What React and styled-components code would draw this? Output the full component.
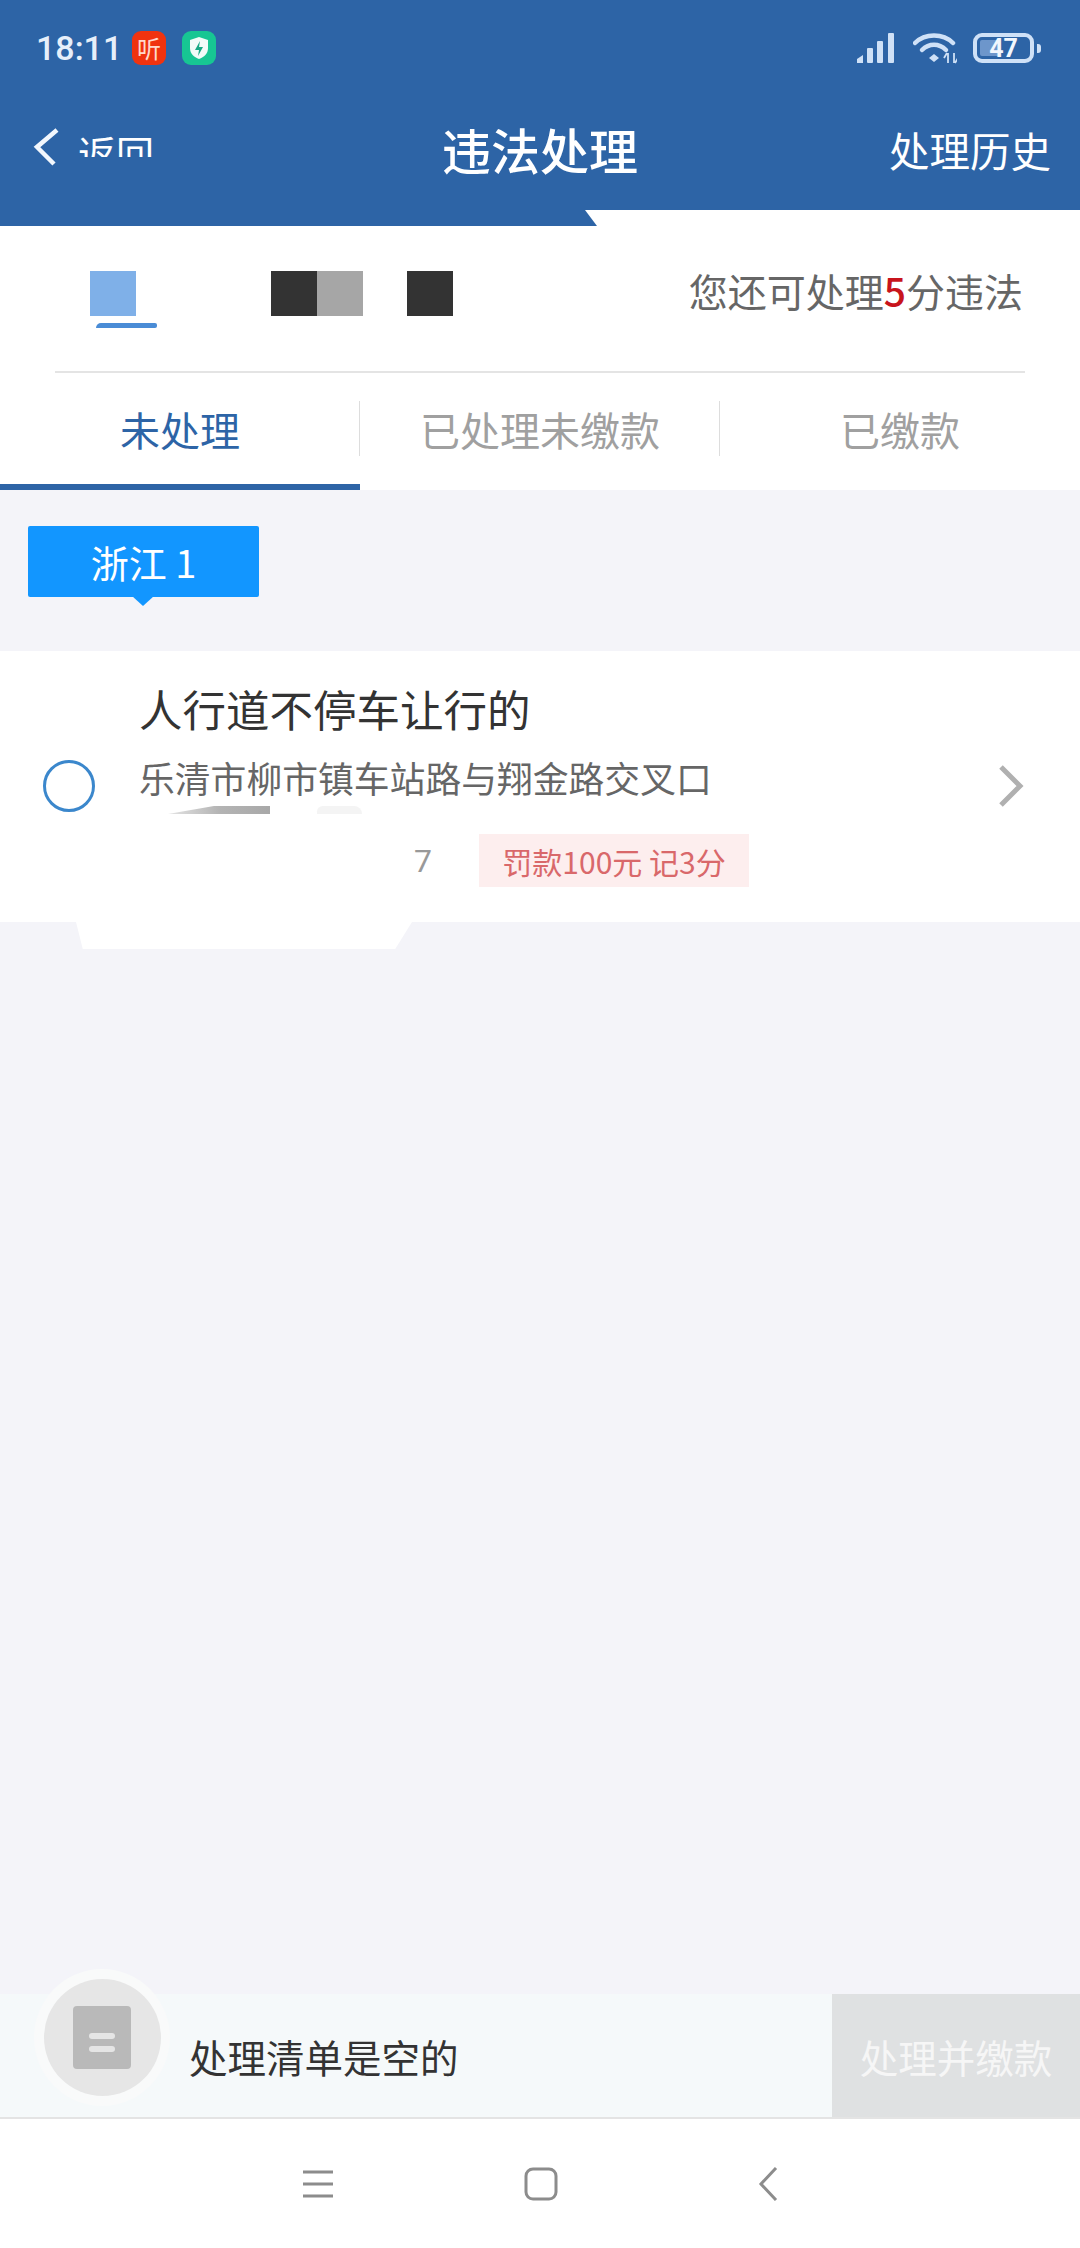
import React from 'react'
import styled, { createGlobalStyle } from 'styled-components'

const GlobalStyle = createGlobalStyle`
    html, body {
        margin: 0;
        padding: 0;
        background: #f4f4f9;
    }
    * {
        box-sizing: border-box;
    }
`

const Page = styled.div`
    width: 1080px;
    height: 2248px;
    display: flex;
    flex-direction: column;
    overflow: hidden;
    background: #f4f4f9;
    font-family: 'Noto Sans CJK SC', 'Noto Sans', sans-serif;
`

const HeaderWrap = styled.div`
    flex: none;
    background: #fff;
`

const Header = styled.header`
    height: 226px;
    display: flex;
    flex-direction: column;
    background: #2d64a6;
    clip-path: polygon(0 0, 100% 0, 100% 210px, 585px 210px, 597px 226px, 0 226px);
`

const StatusBar = styled.div`
    height: 96px;
    padding: 0 46px 0 36px;
    display: flex;
    align-items: center;
    flex: none;
`

const Time = styled.span`
    font-family: Roboto, sans-serif;
    font-weight: 500;
    font-size: 34px;
    line-height: 1;
    color: #e6effa;
    width: 96px;
`

const AppIcon = styled.span`
    width: 34px;
    height: 34px;
    margin-right: 16px;
    border-radius: 9px;
    display: flex;
    align-items: center;
    justify-content: center;
    background: ${(p) => p.$bg};
    color: #ffd9cc;
    font-size: 24px;
    line-height: 1;
`

const StatusRight = styled.div`
    margin-left: auto;
    display: flex;
    align-items: center;
`

const Battery = styled.div`
    position: relative;
    width: 61px;
    height: 30px;
    margin-left: 16px;
    border: 4px solid #cfe1f7;
    border-radius: 9px;
    display: flex;
    align-items: center;
    justify-content: center;
    font-family: Roboto, sans-serif;
    font-weight: 700;
    font-size: 25px;
    color: #f2f7fd;

    &::before {
        content: '';
        position: absolute;
        left: 3px;
        top: 3px;
        bottom: 3px;
        width: 20px;
        background: #6d96cb;
        border-radius: 2px;
    }

    &::after {
        content: '';
        position: absolute;
        right: -11px;
        top: 7px;
        width: 4px;
        height: 9px;
        background: #cfe1f7;
        border-radius: 0 3px 3px 0;
    }

    & span {
        position: relative;
    }
`

const NavBar = styled.div`
    flex: 1;
    padding: 0 29px 22px 33px;
    display: flex;
    align-items: center;
    color: #fff;
`

const BackLink = styled.div`
    width: 357px;
    display: flex;
    align-items: flex-start;
    height: 36px;
    margin-top: -2px;
    gap: 19px;

    & svg {
        flex: none;
        margin-top: -3px;
    }
`

const BackText = styled.span`
    display: block;
    height: 25px;
    overflow: hidden;
    margin-top: 1px;
    font-size: 38px;
    line-height: 40px;
    width: 80px;
    white-space: nowrap;
`

const Title = styled.h1`
    margin: 0 0 2px;
    width: 300px;
    text-align: center;
    font-size: 49px;
    font-weight: 500;
    line-height: 60px;
`

const HistoryLink = styled.span`
    margin-left: auto;
    font-size: 40.5px;
    line-height: 50px;
`

const PlateRow = styled.div`
    height: 147px;
    margin: 0 55px;
    padding: 41px 2px 0 35px;
    position: relative;
    display: flex;
    justify-content: space-between;
    border-bottom: 2px solid #e4e4e4;
`

const Plate = styled.div`
    display: flex;
    height: 45px;
    margin-top: 4px;
`

const Block = styled.span`
    width: ${(p) => p.$w || 46}px;
    height: 45px;
    background: ${(p) => p.$color || 'transparent'};
`

const PlateMark = styled.span`
    position: absolute;
    left: 41px;
    top: 97px;
    width: 61px;
    height: 5px;
    background: #4a8cd6;
    border-radius: 5px 2px 2px 0;
`

const QuotaText = styled.div`
    font-size: 39px;
    line-height: 46px;
    color: #666;
    white-space: nowrap;

    & b {
        color: #c8141c;
        font-weight: 500;
    }
`

const Tabs = styled.div`
    height: 117px;
    flex: none;
    display: grid;
    grid-template-columns: 360px 360px 360px;
`

const Tab = styled.div`
    position: relative;
    display: flex;
    align-items: center;
    justify-content: center;
    padding-top: 1px;
    font-size: 40px;
    color: ${(p) => (p.$active ? '#2d64a6' : '#a0a0a0')};
    border-bottom: 6px solid ${(p) => (p.$active ? '#2d64a6' : 'transparent')};

    &:not(:last-child)::after {
        content: '';
        position: absolute;
        right: 0;
        top: 28px;
        height: 55px;
        width: 1px;
        background: #dddddd;
    }
`

const TopPanel = styled.div`
    background: #fff;
    flex: none;
`

const Main = styled.main`
    flex: 1;
    padding: 36px 0 0;
    position: relative;
`

const Badge = styled.div`
    position: relative;
    width: 231px;
    height: 71px;
    margin-left: 28px;
    background: #1296ff;
    border-radius: 2px;
    display: flex;
    align-items: center;
    justify-content: center;
    color: #fff;
    font-size: 38px;
    line-height: 1;
    white-space: pre;

    &::after {
        content: '';
        position: absolute;
        left: 104px;
        bottom: -9px;
        border-left: 11px solid transparent;
        border-right: 11px solid transparent;
        border-top: 10px solid #1296ff;
    }
`

const Card = styled.div`
    position: relative;
    height: 271px;
    margin-top: 54px;
    background: #fff;
    padding: 31px 0 0 139px;
`

const Radio = styled.span`
    position: absolute;
    left: 43px;
    top: 109px;
    width: 52px;
    height: 52px;
    border: 3px solid #3b87cc;
    border-radius: 50%;
`

const Chevron = styled.svg`
    position: absolute;
    left: 997px;
    top: 114px;
`

const ItemTitle = styled.div`
    font-size: 43.5px;
    line-height: 54px;
    color: #333;
    white-space: nowrap;
`

const ItemAddress = styled.div`
    margin-top: 19px;
    font-size: 35.8px;
    line-height: 44px;
    color: #666;
    white-space: nowrap;
`

const MetaRow = styled.div`
    margin-top: 35px;
    display: flex;
    align-items: center;
    padding-left: 275px;
`

const MetaDigit = styled.span`
    width: 65px;
    font-family: Roboto, sans-serif;
    font-size: 32px;
    color: #999;
`

const PenaltyTag = styled.span`
    width: 270px;
    height: 53px;
    display: flex;
    align-items: center;
    justify-content: center;
    background: #fdeeee;
    color: #d9686a;
    font-size: 30px;
    white-space: pre;
`

/* blurred-out patches left on the screenshot */
const SmearGrey = styled.span`
    position: absolute;
    left: 168px;
    top: 155px;
    width: 102px;
    height: 8px;
    background: linear-gradient(90deg, #e4e4e4, #b4b4b4 50%, #a8a8a8);
    clip-path: polygon(0 100%, 45% 0, 100% 0, 100% 100%);
`

const SmearLight = styled.span`
    position: absolute;
    left: 317px;
    top: 155px;
    width: 45px;
    height: 8px;
    background: #f4f4f4;
    border-radius: 14px 20px 0 0;
`

const SmearWhite = styled.span`
    position: absolute;
    left: 76px;
    top: 271px;
    width: 336px;
    height: 27px;
    background: #fff;
    clip-path: polygon(0 0, 100% 0, 95% 100%, 2% 100%);
`

const BottomBar = styled.div`
    position: relative;
    flex: none;
    height: 125px;
    padding-left: 189px;
    display: flex;
    align-items: center;
    justify-content: space-between;
    background: #f5f9fa;
    border-bottom: 2px solid #e4e4e4;
`

const CartHalo = styled.div`
    position: absolute;
    left: 34px;
    top: -25px;
    width: 136px;
    height: 137px;
    border-radius: 50%;
    background: #f9fafa;
    display: flex;
    align-items: center;
    justify-content: center;
`

const CartCircle = styled.div`
    width: 117px;
    height: 117px;
    border-radius: 50%;
    background: #e6e6e6;
    display: flex;
    align-items: center;
    justify-content: center;
`

const CartIcon = styled.div`
    width: 58px;
    height: 63px;
    border-radius: 4px;
    background: #b9b9b9;
    display: flex;
    flex-direction: column;
    align-items: center;
    justify-content: center;
    gap: 7px;
    padding-top: 10px;

    & i {
        display: block;
        width: 26px;
        height: 6px;
        border-radius: 3px;
        background: #e5e5e5;
    }
`

const EmptyText = styled.span`
    font-size: 38.5px;
    color: #333;
    white-space: nowrap;
`

const PayButton = styled.div`
    width: 248px;
    height: 123px;
    display: flex;
    align-items: center;
    justify-content: center;
    background: #dfe1e2;
    color: #f6f6f6;
    font-size: 38.5px;
`

const SystemNav = styled.nav`
    height: 129px;
    flex: none;
    background: #fff;
    display: flex;
    align-items: center;
    gap: 190px;
    padding: 0 0 0 302px;
    color: #8c8c8c;
`

const BackGlyph = styled.svg`
    margin-left: 10px;
`

const SignalIcon = () => (
    <svg width="40" height="30" viewBox="0 0 40 30" fill="#cfe1f7">
        <path d="M0 30v-4l6-4v8z" />
        <rect x="10" y="15" width="6" height="15" rx="1" />
        <rect x="20" y="8" width="6" height="22" rx="1" />
        <rect x="31" y="0" width="6" height="30" rx="1" />
    </svg>
)

const WifiIcon = () => (
    <svg width="44" height="32" viewBox="0 0 44 32" fill="none" style={{ marginLeft: 16 }}>
        <path d="M2 11C12 1 30 1 40 11" stroke="#cfe1f7" strokeWidth="4.5" strokeLinecap="round" />
        <path d="M9 18C16 11 26 11 33 18" stroke="#cfe1f7" strokeWidth="4.5" strokeLinecap="round" />
        <path d="M21 22l5 4-5 4-5-4z" fill="#cfe1f7" />
        <path d="M35 21v10M34 21l-3 5M41 31V21M42 31l3-5" stroke="#cfe1f7" strokeWidth="1.8" />
    </svg>
)

const App = () => {
    return (
        <Page>
            <GlobalStyle />
            <HeaderWrap>
                <Header>
                    <StatusBar>
                        <Time>18:11</Time>
                        <AppIcon $bg="#f0330f">听</AppIcon>
                        <AppIcon $bg="#17c693">
                            <svg width="20" height="24" viewBox="0 0 20 24">
                                <path d="M10 1l9 3v8c0 6-4 9-9 11C5 21 1 18 1 12V4z" fill="#f2fbf8" />
                                <path d="M11 5l-5 9h4l-1 6 5-9h-4z" fill="#17a884" />
                            </svg>
                        </AppIcon>
                        <StatusRight>
                            <SignalIcon />
                            <WifiIcon />
                            <Battery><span>47</span></Battery>
                        </StatusRight>
                    </StatusBar>
                    <NavBar>
                        <BackLink>
                            <svg width="26" height="38" viewBox="0 0 26 38" fill="none">
                                <path d="M24 2L4 19l17 17" stroke="#f2f7fd" strokeWidth="4.5" />
                            </svg>
                            <BackText>返回</BackText>
                        </BackLink>
                        <Title>违法处理</Title>
                        <HistoryLink>处理历史</HistoryLink>
                    </NavBar>
                </Header>
            </HeaderWrap>

            <TopPanel>
                <PlateRow>
                    <Plate>
                        <Block $color="#7fb0e8" />
                        <Block $w={135} />
                        <Block $color="#333333" />
                        <Block $color="#a6a6a6" />
                        <Block $w={44} />
                        <Block $color="#333333" />
                    </Plate>
                    <PlateMark />
                    <QuotaText>您还可处理<b>5</b>分违法</QuotaText>
                </PlateRow>
                <Tabs>
                    <Tab $active>未处理</Tab>
                    <Tab>已处理未缴款</Tab>
                    <Tab>已缴款</Tab>
                </Tabs>
            </TopPanel>

            <Main>
                <Badge>浙江 1</Badge>
                <Card>
                    <Radio />
                    <ItemTitle>人行道不停车让行的</ItemTitle>
                    <ItemAddress>乐清市柳市镇车站路与翔金路交叉口</ItemAddress>
                    <SmearGrey />
                    <SmearLight />
                    <MetaRow>
                        <MetaDigit>7</MetaDigit>
                        <PenaltyTag>罚款100元 记3分</PenaltyTag>
                    </MetaRow>
                    <Chevron width="28" height="42" viewBox="0 0 28 42" fill="none">
                        <path d="M4 2l19 19L4 40" stroke="#b0b0b0" strokeWidth="5" />
                    </Chevron>
                    <SmearWhite />
                </Card>
            </Main>

            <BottomBar>
                <CartHalo>
                    <CartCircle>
                        <CartIcon><i /><i /></CartIcon>
                    </CartCircle>
                </CartHalo>
                <EmptyText>处理清单是空的</EmptyText>
                <PayButton>处理并缴款</PayButton>
            </BottomBar>

            <SystemNav>
                <svg width="32" height="30" viewBox="0 0 32 30" stroke="currentColor" strokeWidth="3">
                    <path d="M1 3h30M1 15h30M1 27h30" />
                </svg>
                <svg width="34" height="34" viewBox="0 0 34 34" fill="none" stroke="currentColor" strokeWidth="3">
                    <rect x="2" y="2" width="30" height="30" rx="7" />
                </svg>
                <BackGlyph width="20" height="34" viewBox="0 0 20 34" fill="none" stroke="currentColor" strokeWidth="3">
                    <path d="M18 1L3 17l15 16" />
                </BackGlyph>
            </SystemNav>
        </Page>
    )
}

export default App
